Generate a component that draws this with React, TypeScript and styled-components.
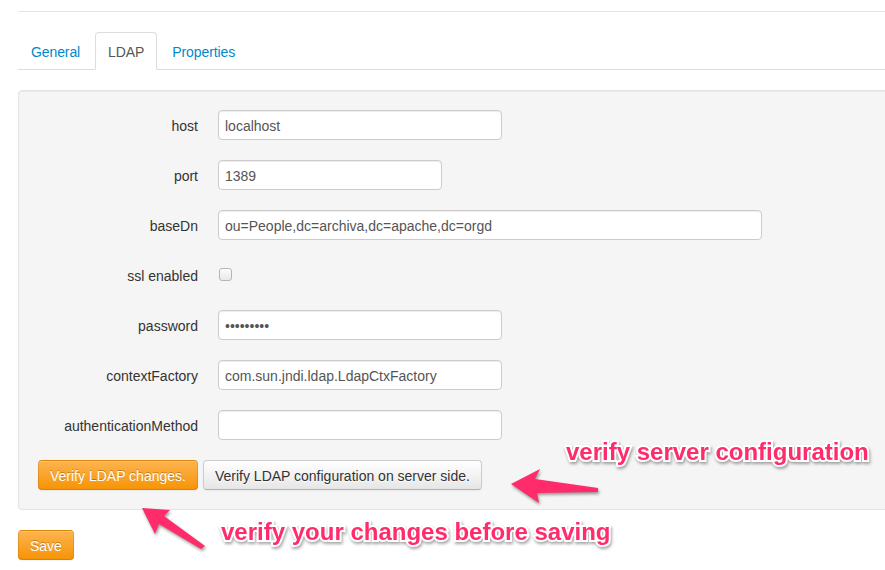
import React from "react";
import styled, { createGlobalStyle } from "styled-components";

const Global = createGlobalStyle`
  html, body { margin: 0; padding: 0; background: #fff; }
  body {
    font-family: "Liberation Sans", Arial, Helvetica, sans-serif;
    font-size: 14px;
    line-height: 20px;
    color: #333;
    overflow: hidden;
    width: 885px;
    height: 570px;
  }
`;

const Page = styled.div`
  position: relative;
  width: 885px;
  height: 570px;
  padding: 0 0 0 18px;
  box-sizing: border-box;
  overflow: hidden;
`;

const Divider = styled.div`
  margin-top: 11px;
  height: 1px;
  background: #e5e5e5;
  margin-right: -20px;
`;

const TabBar = styled.ul`
  display: flex;
  list-style: none;
  margin: 20px -20px 20px 0;
  padding: 0;
  border-bottom: 1px solid #ddd;
`;

const Tab = styled.li<{ $active?: boolean }>`
  margin: 0 2px -1px 0;
  padding: 9px 12px 7px;
  line-height: 20px;
  font-size: 14px;
  letter-spacing: -0.1px;
  border: 1px solid ${(p) => (p.$active ? "#ddd" : "transparent")};
  border-bottom-color: ${(p) => (p.$active ? "#fff" : "transparent")};
  border-radius: 4px 4px 0 0;
  background: ${(p) => (p.$active ? "#fff" : "transparent")};
  color: ${(p) => (p.$active ? "#555" : "#0088cc")};
  cursor: pointer;
`;

const Well = styled.div`
  margin: 0 -20px 20px 0;
  padding: 19px;
  background: #f5f5f5;
  border: 1px solid #e3e3e3;
  border-radius: 4px;
  box-shadow: inset 0 1px 1px rgba(0, 0, 0, 0.05);
`;

const Row = styled.div`
  display: flex;
  align-items: flex-start;
  margin-bottom: 20px;
  min-height: 30px;
`;

const Label = styled.label`
  width: 160px;
  padding-top: 6px;
  line-height: 20px;
  text-align: right;
  color: #333;
  font-size: 14px;
  flex-shrink: 0;
`;

const Controls = styled.div`
  margin-left: 20px;
  display: flex;
  align-items: flex-start;
`;

const Input = styled.input<{ $w: number }>`
  box-sizing: border-box;
  width: ${(p) => p.$w}px;
  height: 30px;
  padding: 5px 6px 3px;
  font-family: "Liberation Sans", Arial, Helvetica, sans-serif;
  font-size: 14px;
  line-height: 20px;
  color: #555;
  background: #fff;
  border: 1px solid #ccc;
  border-radius: 4px;
  box-shadow: inset 0 1px 1px rgba(0, 0, 0, 0.075);
  outline: none;
`;

const Check = styled.input`
  appearance: none;
  -webkit-appearance: none;
  width: 13px;
  height: 13px;
  margin: 8px 0 0 1px;
  border: 1px solid #b5b5b5;
  border-radius: 3px;
  background: linear-gradient(#fcfcfc, #e9e9e9);
  box-shadow: inset 0 1px 0 #fff;
`;

const ButtonRow = styled.div`
  display: flex;
  gap: 5px;
`;

const Button = styled.button<{ $warning?: boolean }>`
  height: 30px;
  padding: 5px 11px 3px;
  font-family: "Liberation Sans", Arial, Helvetica, sans-serif;
  font-size: 14px;
  line-height: 20px;
  border-radius: 4px;
  cursor: pointer;
  color: ${(p) => (p.$warning ? "#fff" : "#333")};
  text-shadow: ${(p) =>
    p.$warning ? "0 -1px 0 rgba(0,0,0,0.25)" : "0 1px 1px rgba(255,255,255,0.75)"};
  background: ${(p) =>
    p.$warning
      ? "linear-gradient(#fbb450, #f89406)"
      : "linear-gradient(#ffffff, #e6e6e6)"};
  border: 1px solid ${(p) => (p.$warning ? "rgba(0,0,0,0.1)" : "#cccccc")};
  border-bottom-color: ${(p) => (p.$warning ? "rgba(0,0,0,0.25)" : "#b3b3b3")};
  box-shadow: inset 0 1px 0 rgba(255, 255, 255, 0.2), 0 1px 2px rgba(0, 0, 0, 0.05);
`;

const Note = styled.div<{ $x: number; $y: number }>`
  position: absolute;
  left: ${(p) => p.$x}px;
  top: ${(p) => p.$y}px;
  font-family: "Liberation Sans", Arial, sans-serif;
  font-weight: bold;
  font-size: 24px;
  line-height: 24px;
  white-space: nowrap;
  color: #ff2b6b;
  -webkit-text-stroke: 4px #fff;
  paint-order: stroke fill;
  filter: drop-shadow(1px 2px 1.5px rgba(0, 0, 0, 0.35));
`;

const Arrows = styled.svg`
  position: absolute;
  left: 0;
  top: 0;
  pointer-events: none;
  filter: drop-shadow(1px 2px 1.5px rgba(0, 0, 0, 0.4));
`;

const fields = [
  { label: "host", value: "localhost", w: 284 },
  { label: "port", value: "1389", w: 224 },
  { label: "baseDn", value: "ou=People,dc=archiva,dc=apache,dc=orgd", w: 544 },
];

const fields2 = [
  { label: "password", value: "123456789", w: 284, type: "password" },
  { label: "contextFactory", value: "com.sun.jndi.ldap.LdapCtxFactory", w: 284, type: "text" },
  { label: "authenticationMethod", value: "", w: 284, type: "text" },
];

export default function App() {
  return (
    <>
      <Global />
      <Page>
        <Divider />
        <TabBar>
          <Tab>General</Tab>
          <Tab $active>LDAP</Tab>
          <Tab>Properties</Tab>
        </TabBar>
        <Well>
          {fields.map((f) => (
            <Row key={f.label}>
              <Label>{f.label}</Label>
              <Controls>
                <Input $w={f.w} defaultValue={f.value} />
              </Controls>
            </Row>
          ))}
          <Row>
            <Label>ssl enabled</Label>
            <Controls>
              <Check type="checkbox" />
            </Controls>
          </Row>
          {fields2.map((f) => (
            <Row key={f.label}>
              <Label>{f.label}</Label>
              <Controls>
                <Input $w={f.w} type={f.type} defaultValue={f.value} />
              </Controls>
            </Row>
          ))}
          <ButtonRow>
            <Button $warning>Verify LDAP changes.</Button>
            <Button>Verify LDAP configuration on server side.</Button>
          </ButtonRow>
        </Well>
        <Button $warning>Save</Button>

        <Arrows width="885" height="570" viewBox="0 0 885 570">
          <polygon
            fill="#ff2b6b"
            points="511,484 540,469 535,479 598,488 598,492 537,493 539,503"
          />
          <polygon
            fill="#ff2b6b"
            points="142,508 170,510 164,516 205,546 201,549 159,524 155,534"
          />
        </Arrows>
        <Note $x={566} $y={440}>verify server configuration</Note>
        <Note $x={221} $y={520}>verify your changes before saving</Note>
      </Page>
    </>
  );
}
